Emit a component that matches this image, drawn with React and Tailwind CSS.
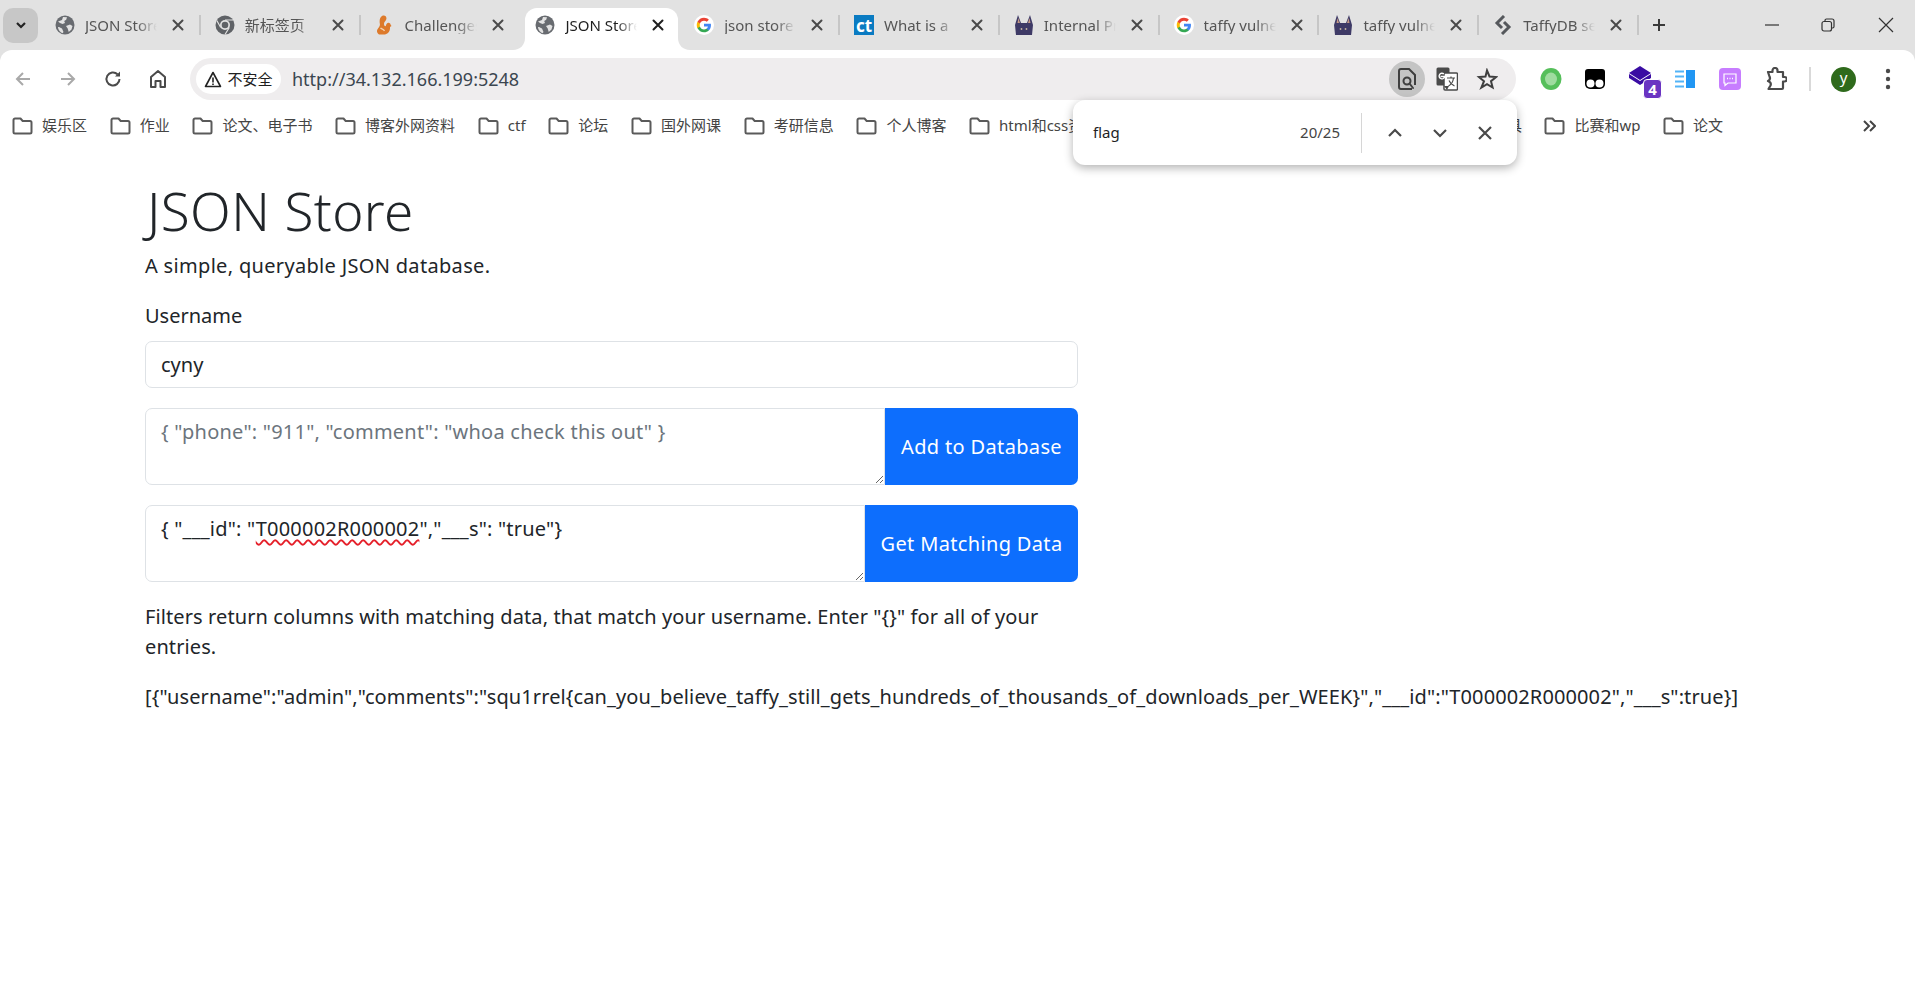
import React from "react";

const Globe = () => (
  <svg width="20" height="20" viewBox="0 0 20 20">
    <circle cx="10" cy="10" r="9.5" fill="#686b70" />
    <path d="M3 6.5 7 5l1-3 4 .2-.8 2.6-2 1.2.8 2-2.5 1L5 8zM11 11l4-1.5 2.5 1.5-1 3.5-2.8 2.5-1-3.5zM4 12l3 1.5 1.5 3.5-1 1.2C5 17.200 3 14.500 3 12z" fill="#e2e2e2" />
  </svg>
);
const ChromeMono = () => (
  <svg width="20" height="20" viewBox="0 0 20 20">
    <circle cx="10" cy="10" r="9.500" fill="#5f6266" />
    <circle cx="10" cy="10" r="5" fill="#e2e2e2" />
    <circle cx="10" cy="10" r="3.300" fill="#5f6266" />
    <path d="M10 5h8M5.700 12.500 1.800 5.500M14.300 12.500 10 19.500" stroke="#e2e2e2" strokeWidth="1.200" />
  </svg>
);
const Squirrel = () => (
  <svg width="20" height="20" viewBox="0 0 20 20">
    <path d="M7 1c3-1.300 5 .8 4.300 3.300-.5 1.700-2.300 2.700-2.300 4.700 0 1.500.8 2.500 1.800 2 .4-2 1.700-3.800 3.500-3 1.500.7 1.200 2 2.200 3l-1.500 1c.3 3-1 7-5 7.500H4c-2-1-2.800-4-1-6 1.300-1.500 2.300-3 1.800-5C4.300 6 4.800 2 7 1z" fill="#dd7a2b" />
    <path d="M5.500 13c1 1 3 1 4 3" stroke="#f3d2b0" strokeWidth="1.300" fill="none" />
  </svg>
);
const GoogleG = () => (
  <svg width="22" height="22" viewBox="0 0 22 22">
    <circle cx="11" cy="11" r="11" fill="#fff" />
    <g transform="translate(3 3) scale(.6667)">
      <path fill="#4285F4" d="M23.500 12.300c0-.8-.1-1.600-.2-2.300H12v4.400h6.500c-.3 1.500-1.100 2.700-2.400 3.600v3h3.800c2.300-2.100 3.600-5.100 3.600-8.700z" />
      <path fill="#34A853" d="M12 24c3.200 0 6-1.100 7.900-2.900l-3.800-3c-1.100.7-2.400 1.200-4.100 1.200-3.100 0-5.800-2.100-6.700-5H1.300v3.100C3.300 21.300 7.300 24 12 24z" />
      <path fill="#FBBC05" d="M5.300 14.300c-.5-1.500-.5-3.100 0-4.600V6.600h-4c-1.700 3.300-1.700 7.500 0 10.800z" />
      <path fill="#EA4335" d="M12 4.800c1.800 0 3.300.6 4.600 1.800l3.400-3.400C17.900 1.200 15.200 0 12 0 7.300 0 3.300 2.700 1.300 6.600l4 3.100c.9-2.800 3.600-4.900 6.700-4.900z" />
    </g>
  </svg>
);
const Ct = () => (
  <span className="flex h-5 w-5 items-center justify-center bg-[#0a7bc2] text-[17px] font-bold leading-none text-white">ct</span>
);
const Dog = () => (
  <svg width="20" height="22" viewBox="0 0 20 22">
    <path d="M2 21 1 11 4 1l3 8h6l3-8 3 10-1 10z" fill="#3e3a66" />
    <path d="M3.500 9 4.500 4 6 9zM14 9l1.500-5 1 5z" fill="#c69a86" />
    <circle cx="7.500" cy="15" r=".9" fill="#c9b6a0" />
    <circle cx="12.500" cy="15" r=".9" fill="#c9b6a0" />
  </svg>
);
const Taffy = () => (
  <svg width="18" height="20" viewBox="0 0 18 20" fill="none" stroke="#55585c" strokeWidth="3" strokeLinejoin="miter">
    <path d="M10 1 3 8l5 5" />
    <path d="M8 19l7-7-5-5" />
  </svg>
);
const CloseX = ({ color = "#4a4a4a" }) => (
  <svg width="14" height="14" viewBox="0 0 14 14" stroke={color} strokeWidth="2" strokeLinecap="round">
    <path d="M2.500 2.500l9 9M11.500 2.500l-9 9" />
  </svg>
);

const tabs = [
  { icon: <Globe />, title: "JSON Store" },
  { icon: <ChromeMono />, title: "新标签页" },
  { icon: <Squirrel />, title: "Challenges" },
  { icon: <Globe />, title: "JSON Store", active: true },
  { icon: <GoogleG />, title: "json store" },
  { icon: <Ct />, title: "What is a" },
  { icon: <Dog />, title: "Internal Pri" },
  { icon: <GoogleG />, title: "taffy vulne" },
  { icon: <Dog />, title: "taffy vulne" },
  { icon: <Taffy />, title: "TaffyDB se" },
];

const Flare = ({ side }) => (
  <svg
    width="12"
    height="12"
    viewBox="0 0 12 12"
    className={side === "left" ? "absolute bottom-0 left-[-12px]" : "absolute bottom-0 right-[-12px]"}
  >
    <path d={side === "left" ? "M12 0v12H0C7 12 12 7 12 0z" : "M0 0v12h12C5 12 0 7 0 0z"} fill="#fff" />
  </svg>
);

function Tab({ icon, title, active, hideSep }) {
  return (
    <div className="flex h-full w-[159.8px] shrink-0 items-center">
      <div
        className={
          active
            ? "relative ml-[5px] flex h-full w-[153px] shrink-0 items-center rounded-t-[12px] bg-white pb-[8px] pl-[10px]"
            : "relative flex h-full w-full items-center pb-[8px] pl-[14px]"
        }
      >
        {active && <Flare side="left" />}
        {active && <Flare side="right" />}
        <span className="flex w-[20px] shrink-0 items-center justify-center">{icon}</span>
        <span
          className={
            "ml-[10px] w-[72px] shrink-0 overflow-hidden whitespace-nowrap text-[15px] leading-[18px] [mask-image:linear-gradient(to_right,black_72%,transparent_100%)] " +
            (active ? "text-[#1f1f1f]" : "text-[#555]")
          }
        >
          {title}
        </span>
        <span className="ml-[14px] flex shrink-0">
          <CloseX color={active ? "#1f1f1f" : "#4a4a4a"} />
        </span>
        {!active && !hideSep && <span className="ml-auto h-[20px] w-[2px] shrink-0 bg-[#c6c6c6]" />}
      </div>
    </div>
  );
}

const Folder = () => (
  <svg width="21" height="18" viewBox="0 0 21 18" fill="none" stroke="#5a5a5a" strokeWidth="2" strokeLinejoin="round" className="shrink-0">
    <path d="M1.500 3A1.500 1.500 0 0 1 3 1.500h5.500l2.200 2.500H18A1.500 1.500 0 0 1 19.500 5.500V15a1.500 1.500 0 0 1-1.500 1.500H3A1.500 1.500 0 0 1 1.500 15z" />
  </svg>
);
const Bookmark = ({ label, className = "" }) => (
  <div className={"flex shrink-0 items-center gap-[9px] " + className}>
    <Folder />
    <span className="text-[15px] leading-none text-[#444]">{label}</span>
  </div>
);

const NavIcon = ({ children }) => <div className="flex w-[45px] shrink-0 items-center justify-center">{children}</div>;

const PageSearch = () => (
  <div className="flex h-[36px] w-[36px] items-center justify-center rounded-full bg-[#c4c4c4]">
    <svg width="20" height="24" viewBox="0 0 20 24" fill="none" stroke="#3f3f3f" strokeWidth="2">
      <path d="M15 22H4a2 2 0 0 1-2-2V4a2 2 0 0 1 2-2h8l6 6v10" />
      <circle cx="10" cy="14" r="3.500" />
      <path d="M12.500 16.500 16 21" strokeLinecap="round" />
    </svg>
  </div>
);
const Translate = () => (
  <svg width="22" height="24" viewBox="0 0 22 24">
    <rect x="0.500" y="0.500" width="13" height="18" rx="1.500" fill="#4a4a4a" />
    <rect x="8" y="6" width="13.500" height="17" rx="1" fill="#fff" stroke="#4a4a4a" strokeWidth="1.500" />
    <path d="M8 19l3 4 2-4z" fill="#4a4a4a" />
    <path d="M4.500 9.500h4.200a2.800 2.800 0 1 1-.8-2.400" fill="none" stroke="#fff" strokeWidth="1.400" />
    <path d="M11 11h8M15 9.500V11M12.500 19c3-1.500 4.500-4 5-8M13 13.500c1 2.500 3 4.500 5.500 5.500" fill="none" stroke="#4a4a4a" strokeWidth="1.200" />
  </svg>
);
const Star = () => (
  <svg width="22" height="22" viewBox="0 0 22 22" fill="none" stroke="#3f3f3f" strokeWidth="2" strokeLinejoin="miter">
    <path d="M11 2.500l2.500 6 6.500.5-5 4.200 1.600 6.300-5.600-3.400-5.600 3.400L8 13.200 3 9l6.500-.5z" />
  </svg>
);

const extClass = [
  "ml-[13px]", "", "ml-[3px]", "ml-[-1px]", "ml-[1px]", "ml-[2px]",
];
const extensions = [
  <svg width="22" height="24" viewBox="0 0 22 24" key="g"><ellipse cx="11" cy="12" rx="10.500" ry="11" fill="#55bf5a" /><ellipse cx="11" cy="12" rx="6" ry="6.500" fill="#9fdc9f" /></svg>,
  <svg width="20" height="20" viewBox="0 0 20 20" key="t"><path d="M3 0h14a3 3 0 0 1 3 3v12a5 5 0 0 1-5 5H5a5 5 0 0 1-5-5V3a3 3 0 0 1 3-3z" fill="#000" /><circle cx="5.500" cy="14.500" r="4" fill="#fff" /><circle cx="14.500" cy="14.500" r="4" fill="#fff" /></svg>,
  <div className="relative h-[26px] w-[26px]" key="d">
    <svg width="22" height="20" viewBox="0 0 22 20" className="absolute left-0 top-0"><path d="M11 0l11 7-11 7L0 7z" fill="#3a0ca3" /><path d="M0 8l11 7 11-7v4l-11 7-11-7z" fill="#3a0ca3" /></svg>
    <span className="absolute bottom-[-7px] right-[-7px] flex h-[20px] w-[19px] items-center justify-center rounded-[4px] border border-white bg-[#6a34c2] text-[15px] font-bold leading-none text-white">4</span>
  </div>,
  <svg width="20" height="18" viewBox="0 0 20 18" key="b"><path d="M0 1.500h9M0 6.500h9M0 11.500h9M0 16.500h9" stroke="#53b4f7" strokeWidth="2" /><rect x="11" y="0" width="9" height="18" fill="#2196f3" /></svg>,
  <svg width="22" height="22" viewBox="0 0 22 22" key="p"><rect width="22" height="22" rx="4" fill="#c77dff" /><path d="M5 6h12v9H9l-3 2.500V15H5z" fill="none" stroke="#fff" strokeWidth="1.200" /><path d="M8 10.500h1M10.500 10.500h1M13 10.500h1" stroke="#fff" strokeWidth="1.400" /></svg>,
  <svg width="22" height="24" viewBox="0 0 22 24" fill="none" stroke="#4a4a4a" strokeWidth="2.200" strokeLinejoin="round" key="z"><path d="M3 5h4.500V3.500a2.500 2.500 0 0 1 5 0V5H18v5h1.500a2 2 0 0 1 0 4.500H18V21a1 1 0 0 1-1 1H3.500l2-3.500c.8-2 0-3.500-2.500-4.500 2-1 2.500-2.500 1.500-4.500z" /></svg>,
];

export default function App() {
  return (
    <div className="relative h-[993px] w-[1915px] overflow-hidden bg-white font-['Noto_Sans','Noto_Sans_CJK_SC',sans-serif]">
      {/* tab strip */}
      <div className="bg-[#e2e2e2]">
        <div className="flex h-[50px] items-center">
          <div className="mx-[3px] flex h-[35px] w-[35px] items-center justify-center rounded-[10px] bg-[#c7c7c7]">
            <svg width="14" height="14" viewBox="0 0 14 14" fill="none" stroke="#222" strokeWidth="2.200"><path d="M3 5l4 4 4-4" /></svg>
          </div>
          <div className="flex h-[42px] self-end">
            {tabs.map((t, i) => (
              <Tab key={i} {...t} hideSep={i === 2} />
            ))}
          </div>
          <svg width="16" height="16" viewBox="0 0 16 16" stroke="#3a3a3a" strokeWidth="2" className="ml-[12px]"><path d="M8 2v12M2 8h12" /></svg>
          <div className="ml-auto flex items-center">
            <svg width="14" height="14" viewBox="0 0 14 14" stroke="#333" strokeWidth="1.200"><path d="M0 7h14" /></svg>
            <svg width="14" height="14" viewBox="0 0 14 14" fill="none" stroke="#333" strokeWidth="1.200" className="ml-[42px]"><rect x="1" y="3.500" width="9.500" height="9.500" rx="2" /><path d="M4 3.500V2.500A1.500 1.500 0 0 1 5.500 1H11a2 2 0 0 1 2 2v5.500A1.500 1.500 0 0 1 11.500 10h-1" /></svg>
            <svg width="16" height="16" viewBox="0 0 16 16" stroke="#333" strokeWidth="1.200" className="ml-[43px] mr-[21px]"><path d="M1 1l14 14M15 1 1 15" /></svg>
          </div>
        </div>

        {/* toolbar */}
        <div className="flex h-[50px] items-start rounded-t-[12px] bg-white pt-[8px]">
          <div className="flex h-[42px] items-center">
            <NavIcon><svg width="18" height="18" viewBox="0 0 18 18" fill="none" stroke="#a9a9a9" strokeWidth="2"><path d="M16 9H3M9 3 3 9l6 6" /></svg></NavIcon>
            <NavIcon><svg width="18" height="18" viewBox="0 0 18 18" fill="none" stroke="#a9a9a9" strokeWidth="2"><path d="M2 9h13M9 3l6 6-6 6" /></svg></NavIcon>
            <NavIcon><svg width="18" height="18" viewBox="0 0 18 18" fill="none" stroke="#4a4a4a" strokeWidth="2"><path d="M15.500 9A6.500 6.500 0 1 1 13.500 4.300" /><path d="M16 1.500v5h-5z" fill="#4a4a4a" stroke="none" /></svg></NavIcon>
            <NavIcon><svg width="18" height="20" viewBox="0 0 18 20" fill="none" stroke="#4a4a4a" strokeWidth="2" strokeLinejoin="round"><path d="M2 8 9 2l7 6v10h-4.500v-6h-5v6H2z" /></svg></NavIcon>
          </div>
          <div className="ml-[10px] flex h-[42px] w-[1326px] shrink-0 items-center rounded-full bg-[#efedee] pl-[6px] pr-[18px]">
            <div className="flex h-[30px] w-[85px] shrink-0 items-center justify-center gap-[5px] rounded-full bg-white">
              <svg width="18" height="17" viewBox="0 0 18 17" fill="none" stroke="#222" strokeWidth="1.600" strokeLinejoin="round"><path d="M9 1.500 16.500 15.500h-15z" /><path d="M9 6.500v5M9 12.500v1.500" /></svg>
              <span className="text-[15px] leading-none text-[#1f1f1f]">不安全</span>
            </div>
            <span className="ml-[11px] text-[18px] leading-none text-[#3b4650]">http://34.132.166.199:5248</span>
            <div className="ml-auto flex items-center">
              <PageSearch />
              <span className="ml-[11px] flex"><Translate /></span>
              <span className="ml-[18px] flex"><Star /></span>
            </div>
          </div>
          <div className="flex h-[42px] items-center">
            {extensions.map((e, i) => (
              <div key={i} className={"flex w-[44px] shrink-0 items-center justify-center " + extClass[i]}>{e}</div>
            ))}
            <span className="ml-[11px] h-[24px] w-[2px] bg-[#d9d9d9]" />
            <span className="ml-[20px] flex h-[25px] w-[25px] items-center justify-center rounded-full bg-[#2f6a1c] pb-[3px] text-[15px] leading-none text-white">y</span>
            <svg width="6" height="22" viewBox="0 0 6 22" fill="#4a4a4a" className="ml-[29px]"><circle cx="3" cy="3" r="2.200" /><circle cx="3" cy="11" r="2.200" /><circle cx="3" cy="19" r="2.200" /></svg>
          </div>
        </div>
      </div>

      {/* bookmarks */}
      <div className="flex h-[51px] items-center overflow-hidden pl-[12px] pr-[39px]">
        <div className="flex gap-[22.700px]">
          {["娱乐区", "作业", "论文、电子书", "博客外网资料", "ctf", "论坛", "国外网课", "考研信息", "个人博客", "html和css资料"].map((b) => (
            <Bookmark key={b} label={b} />
          ))}
        </div>
        <div className="ml-auto flex gap-[22.500px]">
          <Bookmark label="常用工具" />
          <Bookmark label="比赛和wp" />
          <Bookmark label="论文" />
        </div>
        <svg width="14" height="14" viewBox="0 0 14 14" fill="none" stroke="#444" strokeWidth="2" className="ml-[139px]"><path d="M2 2l5 5-5 5M8 2l5 5-5 5" /></svg>
      </div>

      {/* find bar */}
      <div className="absolute left-[1073px] top-[100px] flex h-[65px] w-[444px] items-center rounded-[12px] bg-white pl-[20px] shadow-[0_3px_10px_rgba(0,0,0,0.3)]">
        <span className="text-[15px] leading-none text-[#1f1f1f]">flag</span>
        <span className="ml-auto text-[15px] leading-none text-[#444]">20/25</span>
        <span className="ml-[21px] h-[40px] w-px bg-[#d6d6d6]" />
        <svg width="16" height="12" viewBox="0 0 16 12" fill="none" stroke="#4a4a4a" strokeWidth="2.200" className="ml-[25px]"><path d="M2 9l6-6 6 6" /></svg>
        <svg width="16" height="12" viewBox="0 0 16 12" fill="none" stroke="#4a4a4a" strokeWidth="2.200" className="ml-[29px]"><path d="M2 3l6 6 6-6" /></svg>
        <svg width="16" height="16" viewBox="0 0 16 16" stroke="#4a4a4a" strokeWidth="2.200" className="ml-[29px] mr-[24px]"><path d="M2 2l12 12M14 2 2 14" /></svg>
      </div>

      {/* page */}
      <main className="pl-[145px] pt-[30px] text-[20px] leading-[30px] text-[#212529]">
        <h1 className="h-[60px] pl-[2px] text-[53px] font-light leading-[60px] tracking-[0.4px]">JSON Store</h1>
        <p className="mt-[10px] tracking-[0.32px]">A simple, queryable JSON database.</p>
        <div className="w-[933px]">
          <label className="mt-[20px] mb-[10px] block">Username</label>
          <input
            defaultValue="cyny"
            className="block h-[47px] w-full rounded-[7px] border border-[#dee2e6] bg-white px-[15px] text-[20px] text-[#212529] outline-none"
          />
          <div className="mt-[20px] flex h-[77px]">
            <textarea
              placeholder={'{ "phone": "911", "comment": "whoa check this out" }'}
              className="h-full min-w-0 flex-1 rounded-l-[7px] border border-[#dee2e6] bg-white px-[15px] py-[8px] text-[20px] leading-[30px] tracking-[0.23px] text-[#212529] outline-none placeholder:text-[#6c757d]"
            />
            <button className="h-full w-[193px] shrink-0 rounded-r-[7px] bg-[#0d6efd] text-[20px] tracking-[0.35px] text-white">Add to Database</button>
          </div>
          <div className="mt-[20px] flex h-[77px]">
            <div className="h-full min-w-0 flex-1 resize overflow-hidden rounded-l-[7px] border border-[#dee2e6] bg-white px-[15px] py-[8px] text-[20px] leading-[30px] tracking-[0.2px] text-[#212529]">
              {'{ "___id": "'}
              <span className="underline decoration-[#e5202a] decoration-wavy decoration-[1.5px] underline-offset-[3px]">T000002R000002</span>
              {'","___s": "true"}'}
            </div>
            <button className="h-full w-[213px] shrink-0 rounded-r-[7px] bg-[#0d6efd] text-[20px] tracking-[0.35px] text-white">Get Matching Data</button>
          </div>
          <p className="mt-[20px] tracking-[0.1px]">Filters return columns with matching data, that match your username. Enter "{"{}"}" for all of your entries.</p>
        </div>
        <p className="mt-[20px] whitespace-nowrap tracking-[0.11px]">
          {'[{"username":"admin","comments":"squ1rrel{can_you_believe_taffy_still_gets_hundreds_of_thousands_of_downloads_per_WEEK}","___id":"T000002R000002","___s":true}]'}
        </p>
      </main>
    </div>
  );
}
